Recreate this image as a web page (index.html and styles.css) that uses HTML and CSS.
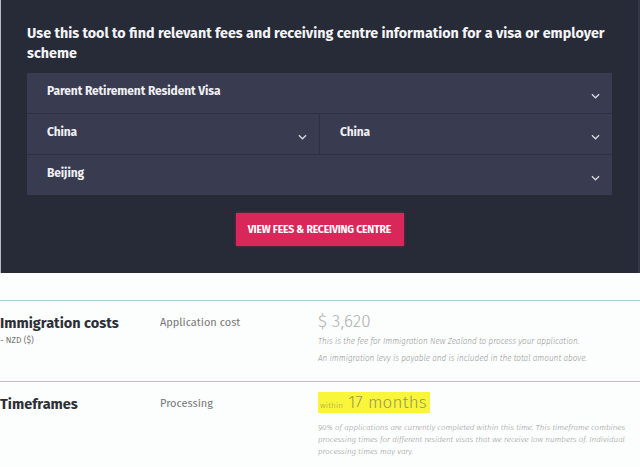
FILE: index.html
```html
<!DOCTYPE html>
<html lang="en">
<head>
<meta charset="utf-8">
<title>Fees and receiving centres</title>
<link rel="stylesheet" href="styles.css">
</head>
<body>
<div class="finder">
  <h2>Use this tool to find relevant fees and receiving centre information for a visa or employer scheme</h2>
  <div class="selects">
    <div class="sel-row">
      <div class="sel">Parent Retirement Resident Visa
        <svg class="chev" viewBox="0 0 10 6"><path d="M1 1 L5 5 L9 1"/></svg></div>
    </div>
    <div class="sel-row">
      <div class="sel">China
        <svg class="chev" viewBox="0 0 10 6"><path d="M1 1 L5 5 L9 1"/></svg></div>
      <div class="sel">China
        <svg class="chev" viewBox="0 0 10 6"><path d="M1 1 L5 5 L9 1"/></svg></div>
    </div>
    <div class="sel-row">
      <div class="sel">Beijing
        <svg class="chev" viewBox="0 0 10 6"><path d="M1 1 L5 5 L9 1"/></svg></div>
    </div>
  </div>
  <div class="btn-wrap">
    <button class="button" type="button">VIEW FEES &amp; RECEIVING CENTRE</button>
  </div>
</div>

<div class="results">
  <div class="res-row">
    <div class="res-label">
      <h3>Immigration costs</h3>
      <span class="unit">- NZD ($)</span>
    </div>
    <div class="res-sub">Application cost</div>
    <div class="res-val">
      <div class="amount">$ 3,620</div>
      <p class="note">This is the fee for Immigration New Zealand to process your application.</p>
      <p class="note">An immigration levy is payable and is included in the total amount above.</p>
    </div>
  </div>
  <div class="res-row">
    <div class="res-label">
      <h3>Timeframes</h3>
    </div>
    <div class="res-sub">Processing</div>
    <div class="res-val">
      <div class="amount"><span class="hl"><small>within</small> 17 months</span></div>
      <p class="note long">90% of applications are currently completed within this time. This timeframe combines processing times for different resident visas that we receive low numbers of. Individual processing times may vary.</p>
    </div>
  </div>
</div>
</body>
</html>
```

FILE: styles.css
```css
body{margin:0; padding:0; background:#fcfdfd; font-family:"Fira Sans", "Open Sans", "Liberation Sans", sans-serif;}

/*------------------------------ finder panel ------------------------------*/

.finder{background-color:#272a37; border-left:1px solid #b9bcc4; border-right:2px solid #33374a; padding:24px 26px 27px 26px;}

.finder h2{margin:0 -12px 9px 0; font-size:14.3px; line-height:20px; font-weight:700; color:#f4f4f6;}

.selects{display:flex; flex-direction:column; gap:1px; background:#2e3142;}
.sel-row{display:flex; gap:1px;}
.sel{flex:1; height:40px; box-sizing:border-box; padding:0 12px 4px 20px; display:flex; align-items:center; justify-content:space-between; background-color:#393c50; color:#f0f0f4; font-size:12px; font-weight:700; letter-spacing:-0.1px;}
.chev{width:9px; height:6px; fill:none; stroke:#d8d9e2; stroke-width:1.4; margin-top:9px;}

.btn-wrap{display:flex; justify-content:center; margin-top:18px;}
.button{background-color:#da2759; border:none; color:#fff; width:168px; height:33px; padding:0; font-family:inherit; font-size:10.5px; font-weight:700; letter-spacing:-0.2px; box-shadow:0 0 3px rgba(218,39,89,0.5);}

/*------------------------------ results ------------------------------*/

.results{margin-top:27px;}
.res-row{display:flex; border-top:1px solid #a9cfcc; padding:12px 0 0 0;}
.res-row:first-child{height:68px;}
.res-label{width:160px; flex:none;}
.res-label h3{margin:0; font-size:14.5px; line-height:20px; font-weight:700; color:#2d2f37;}
.unit{display:block; font-size:8.5px; color:#777; margin-top:2px;}
.res-sub{width:158px; flex:none; font-size:11px; line-height:20px; color:#777;}
.res-val{flex:1;}
.amount{font-weight:300; font-size:17px; line-height:18px; color:#b0b0b0; letter-spacing:0.2px;}
.note{margin:3px 0 0 0; font-style:italic; font-weight:300; font-size:8.2px; line-height:14px; color:#999; white-space:nowrap;}
.note.long{margin-top:7px; font-size:8px; line-height:12px; width:316px; white-space:normal;}
.hl{background:#f8f53a; color:#9c9a56; padding:0 3px 0 2px; font-size:17px;}
.hl small{font-size:8px;}
```
